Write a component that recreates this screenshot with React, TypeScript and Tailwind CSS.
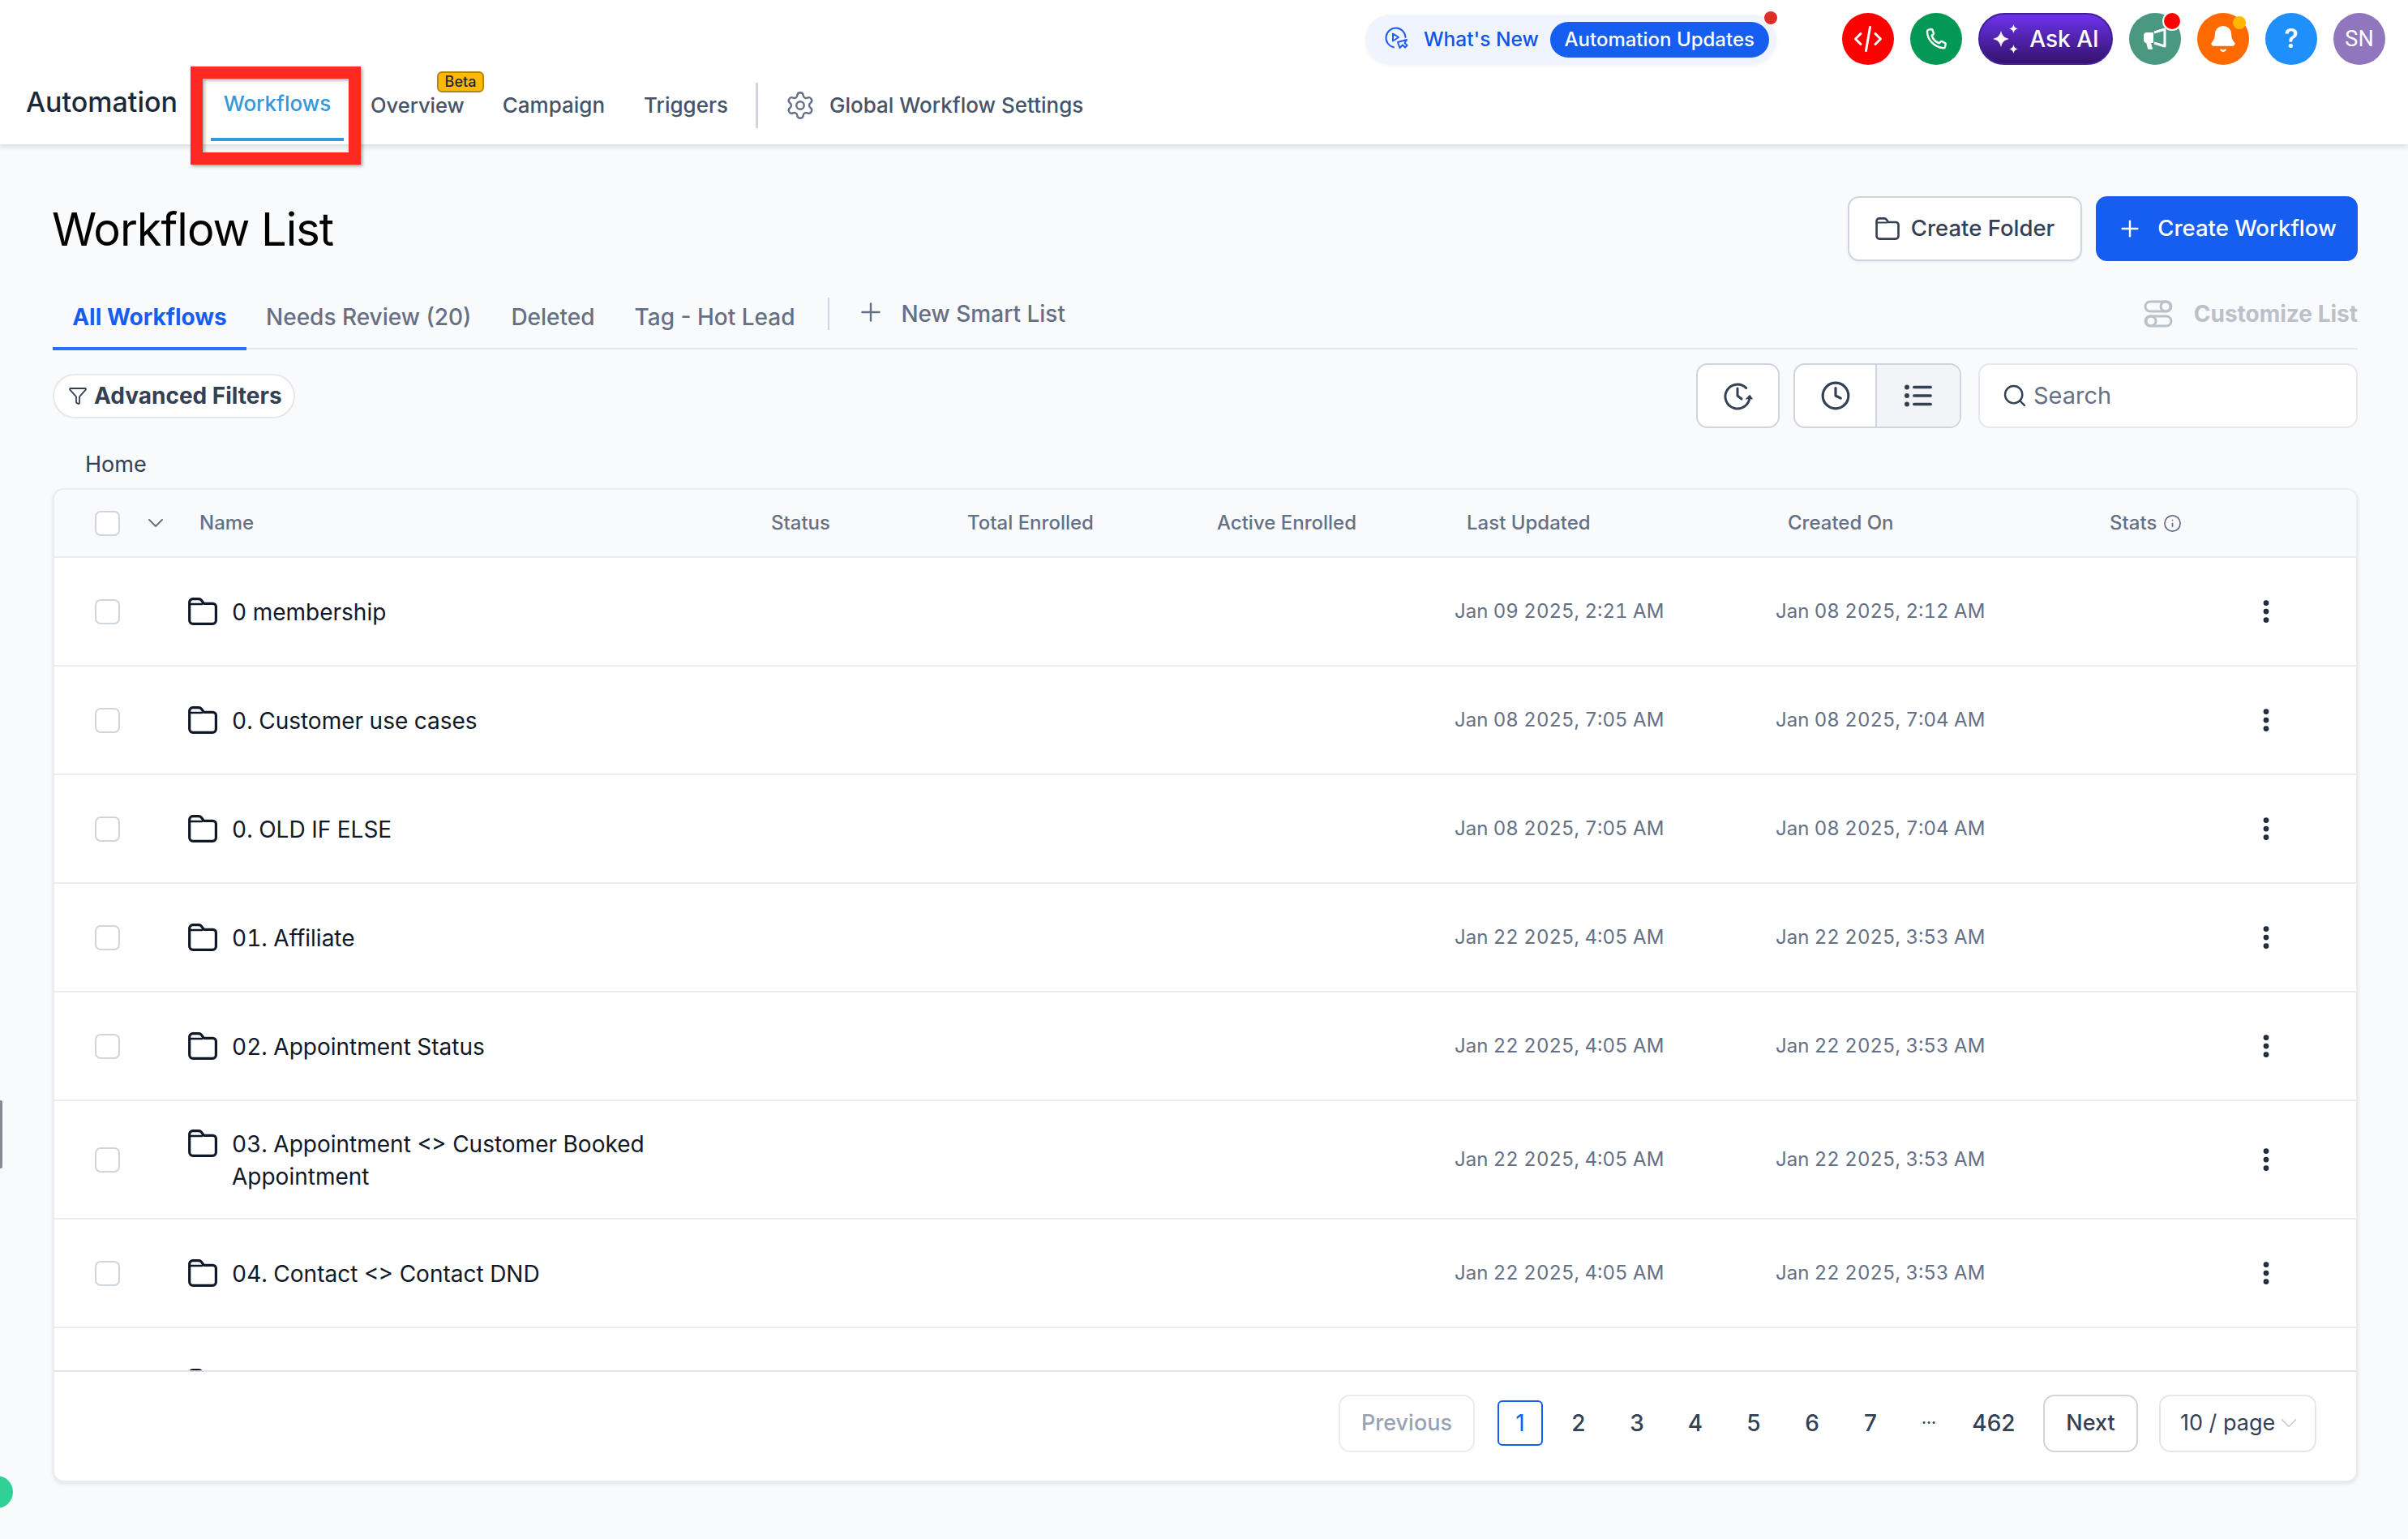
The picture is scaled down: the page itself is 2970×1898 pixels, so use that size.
import React from "react";
import { Plus, Search, Settings, Clock, ChevronDown, EllipsisVertical, Info, Funnel, Bell } from "lucide-react";

const FolderIcon = ({ className = "" }: { className?: string }) => (
  <svg viewBox="0 0 36 34" fill="none" className={className} stroke="currentColor" strokeWidth="3.2" strokeLinejoin="round" strokeLinecap="round">
    <path d="M1.7 6a4 4 0 0 1 4-4.300h7.500a4 4 0 0 1 3.200 1.600l3 4h11a4 4 0 0 1 4 4V28a4.300 4.300 0 0 1-4.300 4.300H6a4.300 4.300 0 0 1-4.300-4.300z" />
    <path d="M2 8h15" strokeWidth="2.400" />
  </svg>
);

const WhatsNewIcon = () => (
  <svg viewBox="0 0 32 32" fill="none" stroke="#1e5cf0" strokeWidth="2" strokeLinecap="round" strokeLinejoin="round" className="w-[32px] h-[32px]">
    <path d="M12 25.300A12 12 0 1 1 26.500 13" />
    <path d="M11 8.500v9l7-4.500z" />
    <path d="M17 19l11-3-2.500 4 3 3-2.500 2.500-3-3-3.500 3.500z" />
  </svg>
);

const HistoryIcon = () => (
  <svg viewBox="0 0 36 36" fill="none" stroke="#344054" strokeWidth="3" strokeLinecap="round" strokeLinejoin="round" className="w-[36px] h-[36px]">
    <path d="M32 19a15 15 0 1 1-4.400-10.600" />
    <path d="M17 9v9l5 4" />
    <path d="M28 22l4-4 3 4" fill="#344054" strokeWidth="1.500" />
  </svg>
);

const BulletListIcon = () => (
  <svg viewBox="0 0 34 28" className="w-[34px] h-[28px]" fill="#344054">
    <circle cx="3" cy="3.500" r="3" />
    <circle cx="3" cy="14" r="3" />
    <circle cx="3" cy="24.500" r="3" />
    <rect x="10" y="1.700" width="24" height="3.600" rx="1.800" />
    <rect x="10" y="12.200" width="24" height="3.600" rx="1.800" />
    <rect x="10" y="22.700" width="24" height="3.600" rx="1.800" />
  </svg>
);

const ToggleIcon = () => (
  <svg viewBox="0 0 36 36" fill="none" stroke="#bcc0c9" strokeWidth="3" className="w-[36px] h-[36px]">
    <rect x="2" y="3" width="32" height="12" rx="6" />
    <circle cx="27" cy="9" r="6" />
    <rect x="2" y="21" width="32" height="12" rx="6" />
    <circle cx="9" cy="27" r="6" />
  </svg>
);

const Sparkles4 = () => (
  <svg viewBox="0 0 36 36" fill="white" className="w-[36px] h-[36px]">
    <path d="M11 8c1.600 6 3.400 8.300 10 10-6.600 1.700-8.400 4-10 10-1.600-6-3.400-8.300-10-10 6.600-1.700 8.400-4 10-10z" />
    <path d="M26.500 0c.9 3.400 1.900 4.600 5.500 5.500-3.600.9-4.600 2.100-5.500 5.500-.9-3.400-1.900-4.600-5.500-5.500 3.600-.9 4.600-2.100 5.500-5.500z" />
    <path d="M26.500 25c.9 3.400 1.900 4.600 5.500 5.500-3.600.9-4.600 2.100-5.500 5.500-.9-3.400-1.900-4.600-5.500-5.500 3.600-.9 4.600-2.100 5.500-5.500z" />
  </svg>
);

const CodeIcon = () => (
  <svg viewBox="0 0 36 36" fill="none" stroke="white" strokeWidth="3" strokeLinecap="round" strokeLinejoin="round" className="w-[36px] h-[36px]">
    <path d="M9 11.500 2.500 18 9 24.500" />
    <path d="M27 11.500 33.500 18 27 24.500" />
    <path d="M20.500 3.500 15.500 32.500" />
  </svg>
);

const PhoneIcon = () => (
  <svg viewBox="0 0 24 24" fill="none" stroke="white" strokeWidth="1.800" strokeLinecap="round" strokeLinejoin="round" className="w-[32px] h-[32px]">
    <path d="M5 3.500 7.500 3c.6 0 1 .3 1.200.8l1 2.800c.2.500 0 1-.4 1.300L8 9c1 3 3.500 5.700 6.800 7l1.200-1.300c.3-.4.9-.5 1.400-.3l2.700 1.200c.5.200.8.700.7 1.200l-.5 2.400c-.2.800-.8 1.300-1.600 1.200C10.500 19.800 4 13 3.700 5.200 3.700 4.400 4.200 3.700 5 3.500z" />
  </svg>
);

const MegaphoneIcon = () => (
  <svg viewBox="0 0 30 28" className="w-[30px] h-[28px]" fill="white">
    <path d="M1 10a4 4 0 0 1 4-4h8v13H10l1.800 6.500a1 1 0 0 1-1 1.500H7.500a1.500 1.500 0 0 1-1.500-1L4.200 19A4 4 0 0 1 1 15z" />
    <path d="M14 6 27 2v21l-13-4" fill="none" stroke="white" strokeWidth="3" strokeLinejoin="round" />
  </svg>
);

const rows = [
  { name: "0 membership", u: "Jan 09 2025, 2:21 AM", c: "Jan 08 2025, 2:12 AM", h: "h-[134px]" },
  { name: "0. Customer use cases", u: "Jan 08 2025, 7:05 AM", c: "Jan 08 2025, 7:04 AM", h: "h-[134px]" },
  { name: "0. OLD IF ELSE", u: "Jan 08 2025, 7:05 AM", c: "Jan 08 2025, 7:04 AM", h: "h-[134px]" },
  { name: "01. Affiliate", u: "Jan 22 2025, 4:05 AM", c: "Jan 22 2025, 3:53 AM", h: "h-[134px]" },
  { name: "02. Appointment Status", u: "Jan 22 2025, 4:05 AM", c: "Jan 22 2025, 3:53 AM", h: "h-[134px]" },
  { name: "03. Appointment <> Customer Booked Appointment", u: "Jan 22 2025, 4:05 AM", c: "Jan 22 2025, 3:53 AM", h: "h-[146px]" },
  { name: "04. Contact <> Contact DND", u: "Jan 22 2025, 4:05 AM", c: "Jan 22 2025, 3:53 AM", h: "h-[134px]" },
];

const Checkbox = ({ className = "" }: { className?: string }) => (
  <div className={"w-[31px] h-[31px] rounded-[7px] border-2 border-[#d0d5dd] bg-white " + className} />
);

const headers = ["Status", "Total Enrolled", "Active Enrolled", "Last Updated", "Created On"];

const pages = ["2", "3", "4", "5", "6", "7"];

export default function App() {
  return (
    <div className="relative w-[2970px] h-[1898px] overflow-hidden bg-[#f9fafb] font-['Inter',sans-serif]">
      {/* Top header */}
      <header className="relative h-[178px] bg-white shadow-[0_3px_7px_rgba(0,0,0,0.13)] flex flex-col">
        <div className="h-[96px] flex items-start justify-end pt-[16px] pr-[28px]">
          <div className="relative mt-[2px] mr-[81px] h-[61px] w-[507px] rounded-full bg-[#eff4fe] shadow-[0_2px_4px_rgba(0,0,0,0.05)] flex items-center pl-[23px]">
            <WhatsNewIcon />
            <span className="ml-[17px] text-[24.500px] font-medium text-[#0d56eb]">What's New</span>
            <span className="ml-[14px] h-[44px] w-[270px] rounded-full bg-[#155eef] text-white text-[24px] font-medium flex items-center justify-center">Automation Updates</span>
            <span className="absolute right-[-1px] top-[-4px] w-[16px] h-[16px] rounded-full bg-[#dc2f25]" />
          </div>
          <div className="flex items-center gap-[20px]">
            <div className="w-[64px] h-[64px] rounded-full bg-[#ff0000] flex items-center justify-center"><CodeIcon /></div>
            <div className="w-[64px] h-[64px] rounded-full bg-[#039855] flex items-center justify-center"><PhoneIcon /></div>
            <div className="w-[166px] h-[64px] rounded-full border-2 border-[#41209a] bg-gradient-to-b from-[#6d33ee] to-[#35126c] flex items-center justify-center gap-[10px] text-white text-[28px] font-medium">
              <Sparkles4 />
              <span>Ask AI</span>
            </div>
            <div className="relative w-[64px] h-[64px] rounded-full bg-[#4a9880] flex items-center justify-center">
              <MegaphoneIcon />
              <span className="absolute right-[-1px] top-[-2px] w-[20px] h-[20px] rounded-full bg-[#ff0000] border-2 border-white box-content" />
            </div>
            <div className="relative w-[64px] h-[64px] rounded-full bg-[#ff6a00] flex items-center justify-center">
              <Bell className="w-[36px] h-[36px] text-white fill-white" strokeWidth={1.500} />
              <span className="absolute right-[4px] top-[4px] w-[16px] h-[16px] rounded-full bg-[#fdb900]" />
            </div>
            <div className="w-[64px] h-[64px] rounded-full bg-[#1f8ffb] flex items-center justify-center text-white text-[32px] font-semibold">?</div>
            <div className="w-[64px] h-[64px] rounded-full bg-[#9077bd] flex items-center justify-center text-white text-[27px] font-['Roboto',sans-serif]">SN</div>
          </div>
        </div>
        <nav className="relative h-[82px] flex items-start pl-[32px] text-[26px] font-medium text-[#475467]">
          <span className="text-[34px] leading-[44px] mt-[8px] font-medium text-[#1d2939] w-[228px]">Automation</span>
          <div className="flex flex-col items-center w-[164px]">
            <span className="text-[#3498db] leading-[36px] mt-[14px]">Workflows</span>
            <span className="mt-[24px] w-full h-[4px] bg-[#3498db]" />
          </div>
          <div className="relative ml-[33px] mt-[16px] leading-[36px] text-[25.500px]">
            Overview
            <span className="absolute left-[82px] top-[-24px] w-[58px] h-[26px] rounded-[6px] border-2 border-[#b5860f] bg-[#ffb900] flex items-center justify-center text-[18px] leading-none text-[#1d2939]">Beta</span>
          </div>
          <span className="ml-[47px] mt-[16px] leading-[36px]">Campaign</span>
          <span className="ml-[48px] mt-[16px] leading-[36px]">Triggers</span>
          <span className="ml-[34px] mt-[6px] w-[3px] h-[56px] bg-[#d0d5dd]" />
          <Settings className="ml-[33px] mt-[15px] w-[38px] h-[38px] text-[#667085]" strokeWidth={1.500} />
          <span className="ml-[17px] mt-[16px] leading-[36px]">Global Workflow Settings</span>
        </nav>
      </header>

      {/* Annotation overlay */}
      <div className="absolute left-[235px] top-[82px] w-[210px] h-[121px] border-[15px] border-[#ff2a1f] shadow-[2px_2px_4px_rgba(0,0,0,0.35),inset_2px_2px_4px_rgba(0,0,0,0.35)]" />

      <main className="px-[65px] pr-[62px]">
        {/* Title row */}
        <div className="h-[144px] pt-[64px] flex items-start justify-between">
          <h1 className="ml-[-1px] text-[56px] tracking-[-1px] leading-[82px] font-normal text-black">Workflow List</h1>
          <div className="flex gap-[17px]">
            <button className="h-[80px] w-[289px] rounded-[14px] border-2 border-[#d0d5dd] bg-white shadow-[0_2px_3px_rgba(16,24,40,0.05)] flex items-center justify-center gap-[14px] text-[27.500px] font-medium text-[#344054]">
              <FolderIcon className="w-[30px] h-[28px] text-[#344054]" />
              Create Folder
            </button>
            <button className="h-[80px] w-[323px] rounded-[14px] border-2 border-[#155eef] bg-[#155eef] flex items-center justify-center gap-[18px] text-[27.500px] font-medium text-white">
              <Plus className="w-[32px] h-[32px]" strokeWidth={1.800} />
              Create Workflow
            </button>
          </div>
        </div>

        {/* Tabs */}
        <div className="relative mt-[43px] h-[66px] border-b-2 border-[#e4e7ec] flex items-start text-[28px] font-medium text-[#667085]">
          <div className="relative h-[66px] w-[239px] text-center font-bold text-[#155eef] leading-[34px] pt-[9px]">
            All Workflows
            <span className="absolute left-0 right-0 bottom-[-1px] h-[4px] bg-[#2970ff]" />
          </div>
          <span className="ml-[24px] leading-[34px] pt-[9px]">Needs Review (20)</span>
          <span className="ml-[49px] leading-[34px] pt-[9px]">Deleted</span>
          <span className="ml-[49px] leading-[34px] pt-[9px]">Tag - Hot Lead</span>
          <span className="ml-[41px] w-[2px] h-[40px] bg-[#d0d5dd] mt-[2px]" />
          <Plus className="ml-[33px] mt-[2px] w-[36px] h-[36px]" strokeWidth={1.600} />
          <span className="ml-[19px] leading-[34px] pt-[5px]">New Smart List</span>
          <div className="ml-auto flex items-center gap-[26px] pt-[4px] font-bold text-[#bcc0c9]">
            <ToggleIcon />
            <span className="leading-[34px]">Customize List</span>
          </div>
        </div>

        {/* Filter row */}
        <div className="mt-[17px] h-[80px] flex items-center">
          <button className="h-[55px] w-[299px] rounded-full border-2 border-[#e4e7ec] bg-white flex items-center pl-[17px] gap-[8px] text-[28px] font-bold text-[#344054]">
            <Funnel className="w-[24px] h-[24px]" strokeWidth={1.800} />
            Advanced Filters
          </button>
          <div className="ml-auto flex items-center">
            <button className="w-[103px] h-[80px] rounded-[14px] border-2 border-[#d0d5dd] bg-white flex items-center justify-center"><HistoryIcon /></button>
            <div className="ml-[17px] w-[207px] h-[80px] rounded-[14px] border-2 border-[#d0d5dd] bg-white flex overflow-hidden">
              <div className="w-[101px] flex items-center justify-center border-r-2 border-[#d0d5dd]"><Clock className="w-[38px] h-[38px] text-[#344054]" strokeWidth={2} /></div>
              <div className="flex-1 bg-[#f2f4f7] flex items-center justify-center"><BulletListIcon /></div>
            </div>
            <div className="ml-[21px] w-[468px] h-[80px] rounded-[14px] border-2 border-[#e4e7ec] bg-white flex items-center pl-[27px] gap-[7px] text-[29px] text-[#667085]">
              <Search className="w-[32px] h-[32px] text-[#344054]" strokeWidth={1.800} />
              Search
            </div>
          </div>
        </div>

        <div className="h-[74px] pl-[40px] text-[27px] leading-[36px] text-[#344054] pt-[27px]">Home</div>

        {/* Table card */}
        <section className="h-[1226px] w-[2843px] rounded-[14px] bg-white border-2 border-[#eaecf0] shadow-[0_2px_4px_rgba(16,24,40,0.1)] flex flex-col overflow-hidden">
          <div className="h-[84px] shrink-0 bg-[#f9fafb] border-b-2 border-[#eaecf0] grid grid-cols-[179px_705px_242px_308px_308px_396px_397px_1fr] items-center text-[24px] font-medium text-[#667085]">
            <div className="flex items-center pl-[50px]">
              <Checkbox />
              <ChevronDown className="ml-[28px] w-[32px] h-[32px] text-[#667085]" strokeWidth={1.500} />
            </div>
            <span>Name</span>
            {headers.map((h) => <span key={h}>{h}</span>)}
            <span className="flex items-center gap-[8px]">Stats <Info className="w-[23px] h-[23px]" strokeWidth={1.800} /></span>
          </div>
          <div className="h-[1002px] shrink-0 overflow-hidden">
            {rows.map((r) => (
              <div key={r.name} className={r.h + " border-b-2 border-[#eaecf0] grid grid-cols-[165px_1562px_396px_587px_30px] items-center"}>
                <Checkbox className="ml-[50px]" />
                <div className="flex items-start gap-[18px] w-[620px] pt-[1px]">
                  <FolderIcon className="w-[36px] h-[34px] text-[#101828] shrink-0 mt-[2px]" />
                  <span className="text-[28px] leading-[40px] text-[#101828] max-w-[560px] tabular-nums">{r.name}</span>
                </div>
                <span className="text-[24px] text-[#667085] tabular-nums">{r.u}</span>
                <span className="text-[24px] text-[#667085] tabular-nums">{r.c}</span>
                <EllipsisVertical className="w-[36px] h-[36px] text-[#1d2939]" strokeWidth={2.500} />
              </div>
            ))}
            <div className="h-[134px] grid grid-cols-[165px_1562px] items-center">
              <Checkbox className="ml-[50px]" />
              <FolderIcon className="w-[36px] h-[34px] text-[#101828]" />
            </div>
          </div>
          <div className="flex-1 border-t-2 border-[#dfe1e6] flex items-center justify-end pr-[49px] pb-[8px]">
            <button className="w-[168px] h-[71px] rounded-[14px] border-2 border-[#eaecf0] bg-white text-[27px] font-medium text-[#98a2b3]">Previous</button>
            <div className="ml-[28px] flex items-center gap-[16px] text-[28px] font-medium text-[#344054]">
              <span className="w-[56px] h-[56px] rounded-[6px] border-2 border-[#155eef] text-[#155eef] font-normal flex items-center justify-center">1</span>
              {pages.map((p) => <span key={p} className="w-[56px] h-[56px] flex items-center justify-center">{p}</span>)}
              <span className="w-[56px] h-[56px] flex items-center justify-center text-[20px] pb-[2px]">···</span>
              <span className="w-[72px] h-[56px] flex items-center justify-center">462</span>
            </div>
            <button className="ml-[25px] w-[117px] h-[71px] rounded-[14px] border-2 border-[#d0d5dd] bg-white text-[27px] font-medium text-[#344054]">Next</button>
            <div className="ml-[26px] w-[194px] h-[71px] rounded-[14px] border-2 border-[#e4e7ec] bg-white flex items-center pl-[24px] text-[27px] text-[#344054]">
              10 / page
              <ChevronDown className="w-[34px] h-[34px] text-[#c5c9d1]" strokeWidth={1.200} />
            </div>
          </div>
        </section>
      </main>

      {/* Edge fragments */}
      <div className="absolute left-0 top-[1357px] w-[3px] h-[84px] rounded-r-[2px] bg-[#888b90]" />
      <div className="absolute left-[-24px] top-[1820px] w-[40px] h-[40px] rounded-full bg-[#30d195]" />
    </div>
  );
}
